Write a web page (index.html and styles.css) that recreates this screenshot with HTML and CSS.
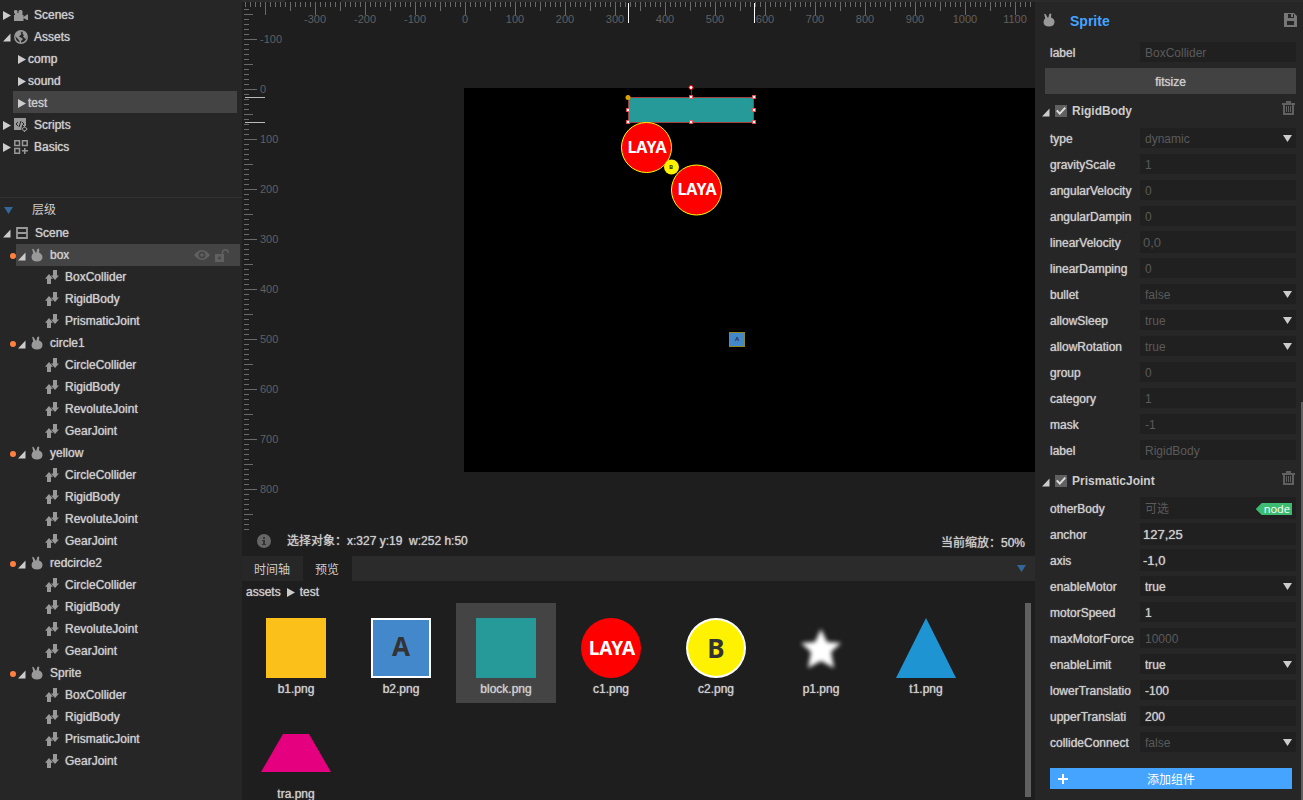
FILE: index.html
```html
<!DOCTYPE html>
<html lang="zh-CN">
<head>
<meta charset="utf-8">
<title>LayaAir IDE</title>
<link rel="stylesheet" href="styles.css">
</head>
<body>
<svg class="defs" aria-hidden="true">
  <symbol id="tri" viewBox="0 0 8 9"><path d="M0 0L8 4.500L0 9z"/></symbol>
  <symbol id="open" viewBox="0 0 8 9"><path d="M7.500.500V8.500H0z"/></symbol>
  <symbol id="down" viewBox="0 0 9 7"><path d="M0 0H9L4.500 7z"/></symbol>
  <symbol id="sprite" viewBox="0 0 12 14"><path d="M1.200 1.300Q1.800.300 2.900 1.500L4.500 4.500L5.400 4.500L6.200 1.200Q7.300 0 8.300 1L8 4.600Q11.500 6 11.500 9.200Q11 13.600 6 13.600Q.900 13.600.500 9.200Q.600 6.500 2.200 5.200z"/></symbol>
  <symbol id="comp" viewBox="0 0 14 14"><path d="M4 4L8 8.700H6V14H2V8.700H0zM8 0H12V5.500H14L10 10L6 5.500H8z"/></symbol>
  <symbol id="trash" viewBox="0 0 13 14"><path d="M4 0H9V2H13V4H0V2H4zM1 4H12V14H1zM3 4V12H10V4zM4 5H5V11H4zM6 5H7V11H6zM8 5H9V11H8z" fill-rule="evenodd"/></symbol>
  <symbol id="camera" viewBox="0 0 14 11"><path d="M.800 0H2.500L3.500 1V3H4.500V1L5.500 0H7.500L8.500 1V5H9.500V7L13 4.500H14V10H13L9.500 8V11H0V5H1V4L0 3V1z"/></symbol>
  <symbol id="globe" viewBox="0 0 14 14"><circle cx="7" cy="7" r="6.200" fill="none" stroke="currentColor" stroke-width="1.500"/><path d="M2 3L5 1L8 1.500L6.500 3L7.500 4L6 5.500L5 7L7 7.500L9 9L7 11V13H6L5 10L2 7L1 5zM9 1L12 3L13 6L12 9L10.500 8L9 6.500L10 5L8.500 4z"/></symbol>
  <symbol id="script" viewBox="0 0 14 14"><path d="M0 0H12V8H8L7 12H0z"/><path d="M4 4L2 6L4 8M7 3L5 9M8 4L10 6L8 8" fill="none" stroke="#262626"/><circle cx="10.500" cy="11" r="2" fill="none" stroke="currentColor"/><path d="M10.500 8V14M7.500 11H13.500" stroke="currentColor" stroke-dasharray="1.500 3"/></symbol>
  <symbol id="basics" viewBox="0 0 14 14"><path d="M.800.800H5.500V5.500H.800zM8.500.800H13.200V5.500H8.500zM.800 8.500H5.500V13.200H.800zM8 10.800H14M10.800 8V14" fill="none" stroke="currentColor" stroke-width="1.500"/></symbol>
  <symbol id="scene" viewBox="0 0 12 12"><path d="M1 1H11V11H1zM1 6H11" fill="none" stroke="currentColor" stroke-width="1.800"/></symbol>
  <symbol id="eye" viewBox="0 0 16 10"><path d="M0 5Q8-5 16 5Q8 15 0 5zM8 1.500A3.500 3.500 0 1 0 8 8.500A3.500 3.500 0 1 0 8 1.500zM8 3.200A1.800 1.800 0 1 1 8 6.800A1.800 1.800 0 1 1 8 3.200z" fill-rule="evenodd"/></symbol>
  <symbol id="lock" viewBox="0 0 14 13"><path d="M0 5H9V13H0zM4.500 7.500A1.500 1.500 0 1 0 4.500 10.500A1.500 1.500 0 1 0 4.500 7.500z" fill-rule="evenodd"/><path d="M7.500 5V3Q8 .800 10.500.800Q13.200.800 13.200 4" fill="none" stroke="currentColor" stroke-width="1.500"/></symbol>
  <symbol id="save" viewBox="0 0 13 14"><path d="M0 0H10L13 3V14H0zM4 1V5H10V1zM3 8V12H10V8zM7 1H9V4H7z" fill-rule="evenodd"/></symbol>
  <symbol id="info" viewBox="0 0 14 14"><circle cx="7" cy="7" r="7" fill="#666"/><path d="M6 3H8V5H6zM5 6H8V10H9V11H5V10H6V7H5z" fill="#333"/></symbol>
</svg>

<div class="app">
  <aside class="side">
    <ul class="tree tree-assets">
      <li class="row"><svg class="caret"><use href="#tri"/></svg><svg class="ico camera"><use href="#camera"/></svg>Scenes</li>
      <li class="row"><svg class="caret"><use href="#open"/></svg><svg class="ico"><use href="#globe"/></svg>Assets</li>
      <li class="row sub"><svg class="caret"><use href="#tri"/></svg>comp</li>
      <li class="row sub"><svg class="caret"><use href="#tri"/></svg>sound</li>
      <li class="row sub selected"><svg class="caret"><use href="#tri"/></svg>test</li>
      <li class="row"><svg class="caret"><use href="#tri"/></svg><svg class="ico"><use href="#script"/></svg>Scripts</li>
      <li class="row"><svg class="caret"><use href="#tri"/></svg><svg class="ico"><use href="#basics"/></svg>Basics</li>
    </ul>
    <h2 class="side-head"><svg class="down"><use href="#down"/></svg>层级</h2>
    <ul class="tree">
      <li class="row"><svg class="caret"><use href="#open"/></svg><svg class="ico scene"><use href="#scene"/></svg>Scene</li>
      <li class="row node"><span class="dot"></span><span class="bar selected"><svg class="caret"><use href="#open"/></svg><svg class="ico sprite"><use href="#sprite"/></svg>box<svg class="eye"><use href="#eye"/></svg><svg class="lock"><use href="#lock"/></svg></span></li>
      <li class="row comp"><svg class="ico"><use href="#comp"/></svg>BoxCollider</li>
      <li class="row comp"><svg class="ico"><use href="#comp"/></svg>RigidBody</li>
      <li class="row comp"><svg class="ico"><use href="#comp"/></svg>PrismaticJoint</li>
      <li class="row node"><span class="dot"></span><span class="bar"><svg class="caret"><use href="#open"/></svg><svg class="ico sprite"><use href="#sprite"/></svg>circle1</span></li>
      <li class="row comp"><svg class="ico"><use href="#comp"/></svg>CircleCollider</li>
      <li class="row comp"><svg class="ico"><use href="#comp"/></svg>RigidBody</li>
      <li class="row comp"><svg class="ico"><use href="#comp"/></svg>RevoluteJoint</li>
      <li class="row comp"><svg class="ico"><use href="#comp"/></svg>GearJoint</li>
      <li class="row node"><span class="dot"></span><span class="bar"><svg class="caret"><use href="#open"/></svg><svg class="ico sprite"><use href="#sprite"/></svg>yellow</span></li>
      <li class="row comp"><svg class="ico"><use href="#comp"/></svg>CircleCollider</li>
      <li class="row comp"><svg class="ico"><use href="#comp"/></svg>RigidBody</li>
      <li class="row comp"><svg class="ico"><use href="#comp"/></svg>RevoluteJoint</li>
      <li class="row comp"><svg class="ico"><use href="#comp"/></svg>GearJoint</li>
      <li class="row node"><span class="dot"></span><span class="bar"><svg class="caret"><use href="#open"/></svg><svg class="ico sprite"><use href="#sprite"/></svg>redcircle2</span></li>
      <li class="row comp"><svg class="ico"><use href="#comp"/></svg>CircleCollider</li>
      <li class="row comp"><svg class="ico"><use href="#comp"/></svg>RigidBody</li>
      <li class="row comp"><svg class="ico"><use href="#comp"/></svg>RevoluteJoint</li>
      <li class="row comp"><svg class="ico"><use href="#comp"/></svg>GearJoint</li>
      <li class="row node"><span class="dot"></span><span class="bar"><svg class="caret"><use href="#open"/></svg><svg class="ico sprite"><use href="#sprite"/></svg>Sprite</span></li>
      <li class="row comp"><svg class="ico"><use href="#comp"/></svg>BoxCollider</li>
      <li class="row comp"><svg class="ico"><use href="#comp"/></svg>RigidBody</li>
      <li class="row comp"><svg class="ico"><use href="#comp"/></svg>PrismaticJoint</li>
      <li class="row comp"><svg class="ico"><use href="#comp"/></svg>GearJoint</li>
    </ul>
  </aside>

  <main class="center">
    <svg class="stage">
      <defs>
        <pattern id="hx" x="23" y="0" width="50" height="15" patternUnits="userSpaceOnUse">
          <path d="M0 2h1v13h-1zM5 2h1v5h-1zM10 2h1v5h-1zM15 2h1v5h-1zM20 2h1v5h-1zM25 2h1v9h-1zM30 2h1v5h-1zM35 2h1v5h-1zM40 2h1v5h-1zM45 2h1v5h-1z" fill="#6a6a6a"/>
        </pattern>
        <pattern id="vx" x="2" y="39" width="15" height="50" patternUnits="userSpaceOnUse">
          <path d="M0 0h13v1h-13zM0 5h5v1h-5zM0 10h5v1h-5zM0 15h5v1h-5zM0 20h5v1h-5zM0 25h9v1h-9zM0 30h5v1h-5zM0 35h5v1h-5zM0 40h5v1h-5zM0 45h5v1h-5z" fill="#6a6a6a"/>
        </pattern>
      </defs>
      <rect width="100%" height="2" fill="#2b2b2b"/>
      <rect x="43" width="56" height="2" fill="#1e1e1e"/>
      <rect x="222" y="88" width="100%" height="384" fill="#000"/>
      <rect x="3" y="0" width="786" height="15" fill="url(#hx)"/>
      <rect x="2" y="8" width="15" height="522" fill="url(#vx)"/>
      <g class="ruler" text-anchor="middle">
        <text x="73" y="23">-300</text><text x="123" y="23">-200</text><text x="173" y="23">-100</text><text x="223" y="23">0</text><text x="273" y="23">100</text><text x="323" y="23">200</text><text x="373" y="23">300</text><text x="423" y="23">400</text><text x="473" y="23">500</text><text x="523" y="23">600</text><text x="573" y="23">700</text><text x="623" y="23">800</text><text x="673" y="23">900</text><text x="723" y="23">1000</text><text x="773" y="23">1100</text>
      </g>
      <g class="ruler">
        <text x="18" y="43">-100</text><text x="18" y="93">0</text><text x="18" y="143">100</text><text x="18" y="193">200</text><text x="18" y="243">300</text><text x="18" y="293">400</text><text x="18" y="343">500</text><text x="18" y="393">600</text><text x="18" y="443">700</text><text x="18" y="493">800</text>
      </g>
      <path d="M386 3h1v20h-1zM512 3h1v20h-1z" fill="#fff"/>
      <path d="M3 97h20v1h-20zM3 122h20v1h-20z" fill="#bbb"/>
      <rect x="386" y="97" width="126" height="25" fill="#269999"/>
      <path d="M386.500 97.500H511.500V122.500H386.500z" fill="none" stroke="#a04040"/>
      <path d="M449.500 88V97" stroke="#d00000"/>
      <g fill="#f00" stroke="#ff0" >
        <circle cx="404.500" cy="147.500" r="25"/><circle cx="454.500" cy="190" r="25"/>
      </g>
      <circle cx="429.500" cy="167" r="7.500" fill="#fff200"/>
      <g class="laya" text-anchor="middle"><text x="405" y="153">LAYA</text><text x="455" y="195">LAYA</text></g>
      <text class="tiny" x="429" y="169" text-anchor="middle">B</text>
      <rect x="487.500" y="332" width="15" height="14.500" fill="#4488cc" stroke="#8f8a20"/>
      <text class="tiny" x="495" y="341" text-anchor="middle">A</text>
      <g fill="#fff" stroke="#f05050">
        <path d="M384.500 108.500h3v3h-3zM384.500 120.500h3v3h-3zM447.500 95.500h3v3h-3zM447.500 120.500h3v3h-3zM510.500 95.500h3v3h-3zM510.500 108.500h3v3h-3zM510.500 120.500h3v3h-3z"/>
        <circle cx="449" cy="87.500" r="2" stroke="#f00"/>
      </g>
      <circle cx="386" cy="97.500" r="2.500" fill="#e0a000"/>
    </svg>
    <div class="status">
      <svg class="info"><use href="#info"/></svg>
      <span class="sel">选择对象：x:327 y:19&nbsp; w:252 h:50</span>
      <span class="zoom">当前缩放：50%</span>
    </div>
    <div class="tabs">
      <button class="tab">时间轴</button><button class="tab active">预览</button>
      <svg class="down"><use href="#down"/></svg>
    </div>
    <div class="crumb">assets<svg class="caret"><use href="#tri"/></svg>test</div>
    <div class="files">
      <div class="grid">
        <figure class="file"><svg viewBox="0 0 60 60"><path d="M0 0H60V60H0z" fill="#fcc01b"/></svg><figcaption>b1.png</figcaption></figure>
        <figure class="file"><svg viewBox="0 0 60 60"><path d="M0 0H60V60H0z" fill="#fff"/><path d="M2 2H58V58H2z" fill="#4488cc"/><text class="glyph" x="30" y="38" text-anchor="middle">A</text></svg><figcaption>b2.png</figcaption></figure>
        <figure class="file selected"><svg viewBox="0 0 60 60"><path d="M0 0H60V60H0z" fill="#269999"/></svg><figcaption>block.png</figcaption></figure>
        <figure class="file"><svg viewBox="0 0 60 60"><circle cx="30" cy="30" r="30" fill="#f00"/><text class="laya big" x="31" y="37" text-anchor="middle">LAYA</text></svg><figcaption>c1.png</figcaption></figure>
        <figure class="file"><svg viewBox="0 0 60 60"><circle cx="30" cy="30" r="30" fill="#fff"/><circle cx="30" cy="30" r="28" fill="#fff200"/><text class="glyph" x="30" y="40" text-anchor="middle">B</text></svg><figcaption>c2.png</figcaption></figure>
        <figure class="file"><svg viewBox="0 0 60 60"><path class="soft" d="M30 11L36 24L50 25L40 34L43 50L30 43L17 50L20 34L10 25L24 24z" fill="#fff"/></svg><figcaption>p1.png</figcaption></figure>
        <figure class="file"><svg viewBox="0 0 60 60"><path d="M30 0L60 60H0z" fill="#1e94d2"/></svg><figcaption>t1.png</figcaption></figure>
        <figure class="file"><svg class="wide" viewBox="0 0 70 60"><path d="M22 11H48L70 49H0z" fill="#e4007f"/></svg><figcaption>tra.png</figcaption></figure>
      </div>
      <div class="thumb"></div>
    </div>
  </main>

  <aside class="props">
    <header class="title"><svg class="ico sprite"><use href="#sprite"/></svg><h1>Sprite</h1><svg class="save"><use href="#save"/></svg></header>
    <div class="field"><label for="f1">label</label><input id="f1" placeholder="BoxCollider"></div>
    <button class="fit">fitsize</button>
    <section>
      <div class="head"><svg class="caret"><use href="#open"/></svg><input type="checkbox" id="c1" checked><label for="c1">RigidBody</label><svg class="trash"><use href="#trash"/></svg></div>
      <div class="field pick"><label for="r1">type</label><select id="r1" class="dim"><option>dynamic</option></select><svg class="arrow"><use href="#down"/></svg></div>
      <div class="field"><label for="r2">gravityScale</label><input id="r2" placeholder="1"></div>
      <div class="field"><label for="r3">angularVelocity</label><input id="r3" placeholder="0"></div>
      <div class="field"><label for="r4">angularDampin</label><input id="r4" placeholder="0"></div>
      <div class="field vec"><label for="r5">linearVelocity</label><input id="r5" placeholder="0,0"></div>
      <div class="field"><label for="r6">linearDamping</label><input id="r6" placeholder="0"></div>
      <div class="field pick"><label for="r7">bullet</label><select id="r7" class="dim"><option>false</option></select><svg class="arrow"><use href="#down"/></svg></div>
      <div class="field pick"><label for="r8">allowSleep</label><select id="r8" class="dim"><option>true</option></select><svg class="arrow"><use href="#down"/></svg></div>
      <div class="field pick"><label for="r9">allowRotation</label><select id="r9" class="dim"><option>true</option></select><svg class="arrow"><use href="#down"/></svg></div>
      <div class="field"><label for="r10">group</label><input id="r10" placeholder="0"></div>
      <div class="field"><label for="r11">category</label><input id="r11" placeholder="1"></div>
      <div class="field"><label for="r12">mask</label><input id="r12" placeholder="-1"></div>
      <div class="field"><label for="r13">label</label><input id="r13" placeholder="RigidBody"></div>
    </section>
    <section class="next">
      <div class="head"><svg class="caret"><use href="#open"/></svg><input type="checkbox" id="c2" checked><label for="c2">PrismaticJoint</label><svg class="trash"><use href="#trash"/></svg></div>
      <div class="field tall"><label for="p1">otherBody</label><input id="p1" placeholder="可选"><span class="tag">node</span></div>
      <div class="field vec"><label for="p2">anchor</label><input id="p2" value="127,25"></div>
      <div class="field vec"><label for="p3">axis</label><input id="p3" value="-1,0"></div>
      <div class="field pick"><label for="p4">enableMotor</label><select id="p4"><option>true</option></select><svg class="arrow"><use href="#down"/></svg></div>
      <div class="field"><label for="p5">motorSpeed</label><input id="p5" value="1"></div>
      <div class="field"><label for="p6">maxMotorForce</label><input id="p6" placeholder="10000"></div>
      <div class="field pick"><label for="p7">enableLimit</label><select id="p7"><option>true</option></select><svg class="arrow"><use href="#down"/></svg></div>
      <div class="field"><label for="p8">lowerTranslatio</label><input id="p8" value="-100"></div>
      <div class="field"><label for="p9">upperTranslati</label><input id="p9" value="200"></div>
      <div class="field pick"><label for="p10">collideConnect</label><select id="p10" class="dim"><option>false</option></select><svg class="arrow"><use href="#down"/></svg></div>
    </section>
    <button class="add"><svg class="plus" viewBox="0 0 10 10"><path d="M0 5H10M5 0V10" stroke="#fff" stroke-width="2"/></svg><span>添加组件</span></button>
    <div class="page-thumb"></div>
  </aside>
</div>
</body>
</html>
```

FILE: styles.css
```css
* { box-sizing: border-box; }
body {
  margin: 0;
  background: #262626;
  color: #ccc;
  font: 12px/22px "Liberation Sans", "Noto Sans CJK SC", sans-serif;
  overflow: hidden;
}
button, input, select { font: inherit; color: inherit; border: 0; border-radius: 0; margin: 0; }
svg { fill: currentColor; flex: none; }
.defs { position: absolute; width: 0; height: 0; }
.app { display: grid; grid-template-columns: 242px 1fr 268px; height: 100vh; }

/* Slightly heavier strokes for list entries and field names */
.row, .sel, .zoom, .crumb, figcaption, .fit, .field label, .field input, .field select { text-shadow: 0 0 1px currentColor; }
.field input::placeholder, .field .dim, .side-head { text-shadow: none; }

/* Trees */
.side { overflow: hidden; }
.tree { list-style: none; margin: 0; padding: 0; }
.tree-assets { padding-top: 3px; height: 197px; }
.row { display: flex; align-items: center; height: 22px; padding-left: 3px; }
.tree-assets .row { padding-top: 2px; }
.caret { width: 8px; height: 9px; margin-right: 3px; }
.ico { width: 14px; height: 14px; margin-right: 6px; color: #999; }
.camera { height: 11px; }
.scene { width: 12px; height: 12px; margin: 0 7px 0 2px; }
.sub { margin: 0 5px 0 13px; padding-left: 5px; }
.sub .caret { margin-right: 2px; }
.selected { background: #444; }
.side-head {
  display: flex; align-items: center; gap: 19px; height: 25px;
  margin: 0; padding-left: 4px; border-top: 1px solid #333;
  font: inherit; font-weight: 400;
}
.down { width: 9px; height: 7px; color: #336699; }
.node { padding: 0 2px 0 10px; }
.dot { width: 6px; height: 6px; margin-top: 2px; border-radius: 50%; background: #ff8040; }
.bar { display: flex; flex: 1; align-items: center; height: 22px; padding: 0 11px 0 2px; }
.bar .caret { margin: 2px 5px 0 0; }
.sprite { width: 12px; height: 14px; margin-right: 7px; }
.eye { width: 16px; height: 10px; margin-left: auto; color: #606060; }
.lock { width: 14px; height: 13px; margin-left: 5px; color: #606060; }
.comp { padding-left: 45px; }

/* Editor */
.center { display: flex; flex-direction: column; min-width: 0; height: 100vh; background: #1e1e1e; }
.stage { width: 100%; height: 530px; }
.stage rect { shape-rendering: crispEdges; }
.ruler { font-size: 11px; fill: #606060; }
.laya { font: bold 16px "Noto Sans", sans-serif; fill: #fff; }
.big { font-size: 19px; }
.tiny { font: bold 6px "Noto Sans", sans-serif; fill: #333; }
.glyph { font: bold 26px "Noto Sans", sans-serif; fill: #333; }
.soft { filter: blur(2px); }
.status { display: flex; align-items: center; height: 26px; padding: 0 10px 4px 15px; flex: none; }
.info { width: 14px; height: 14px; margin-right: 16px; }
.zoom { margin-left: auto; padding-top: 4px; }
.tabs { display: flex; align-items: center; height: 25px; padding-right: 9px; background: #2b2b2b; flex: none; }
.tab { height: 25px; padding: 2px 13px 0 12px; background: #272727; }
.active { background: #1e1e1e; }
.tabs .down { margin-left: auto; }
.crumb { display: flex; align-items: center; height: 22px; padding-left: 4px; flex: none; }
.crumb .caret { margin: 0 5px 0 6px; }
.files { display: flex; flex: 1; min-height: 0; padding: 0 4px; }
.grid { display: grid; flex: 1; grid-template-columns: repeat(auto-fill, 100px); grid-auto-rows: 100px; gap: 5px; overflow: hidden; }
.file { display: flex; flex-direction: column; align-items: center; margin: 0; padding-top: 15px; }
.file svg { width: 60px; height: 60px; }
.file .wide { width: 70px; }
figcaption { margin-top: 5px; line-height: 12px; }
.thumb { width: 6px; margin-bottom: 3px; background: #606060; }

/* Inspector */
.props { position: relative; padding: 0 7px 0 10px; overflow: hidden; border-top: 2px solid #2b2b2b; }
.title { display: flex; align-items: center; height: 37px; }
.title .sprite { margin: 0 15px 2px -2px; }
.title h1 { flex: 1; margin: 0; font-size: 14px; color: #44a4ff; }
.save { width: 13px; height: 14px; margin: 0 -1px 2px 0; color: #777; }
.field { display: flex; align-items: center; height: 26px; padding-left: 5px; }
.field label { width: 90px; flex: none; padding-top: 2px; white-space: nowrap; }
.field input, .field select {
  flex: 1; min-width: 0; width: 0; height: 20px; padding: 0 5px;
  background: #202020; appearance: none; outline: 0;
}
.field input { padding-top: 2px; }
.field.vec input { height: 22px; padding: 2px 3px 0; font-size: 13px; }
.field input::placeholder { color: #5a5a5a; opacity: 1; }
.field .dim { color: #5a5a5a; }
.pick, .tall { position: relative; }
.tall input { height: 22px; }
.arrow { position: absolute; right: 4px; top: 10px; width: 9px; height: 7px; pointer-events: none; }
.tag {
  position: absolute; right: 4px; top: 8px; padding: 0 2px 0 8px;
  color: #fff; background: #3dbb70; font: 11px/12px "Open Sans", sans-serif;
  clip-path: polygon(0 50%, 6px 0, 100% 0, 100% 100%, 6px 100%);
}
.fit { display: block; width: 100%; height: 26px; margin: 3px 0; padding-top: 2px; background: #424242; }
.head { display: flex; align-items: center; height: 28px; font-weight: bold; }
.head .caret { margin: 2px 5px 0 -3px; }
.head input {
  width: 12px; height: 12px; margin-right: 5px; appearance: none;
  background: #606060;
  display: grid; place-items: center;
}
.head input::after {
  content: ""; width: 10px; height: 8px; background: #ddd;
  clip-path: polygon(0 50%, 15% 35%, 38% 65%, 85% 0, 100% 15%, 38% 100%);
}
.trash { width: 13px; height: 14px; margin: 0 1px 6px auto; color: #606060; }
.next { margin-top: 4px; }
.add { display: flex; align-items: center; width: calc(100% - 9px); height: 21px; margin: 13px 4px 0 5px; padding: 0 8px; background: #44a4ff; color: #fff; }
.plus { width: 10px; height: 10px; }
.add span { flex: 1; padding: 2px 10px 0 0; text-align: center; }
.page-thumb { position: absolute; right: 0; top: 400px; bottom: 0; width: 2px; background: #606060; }
```
